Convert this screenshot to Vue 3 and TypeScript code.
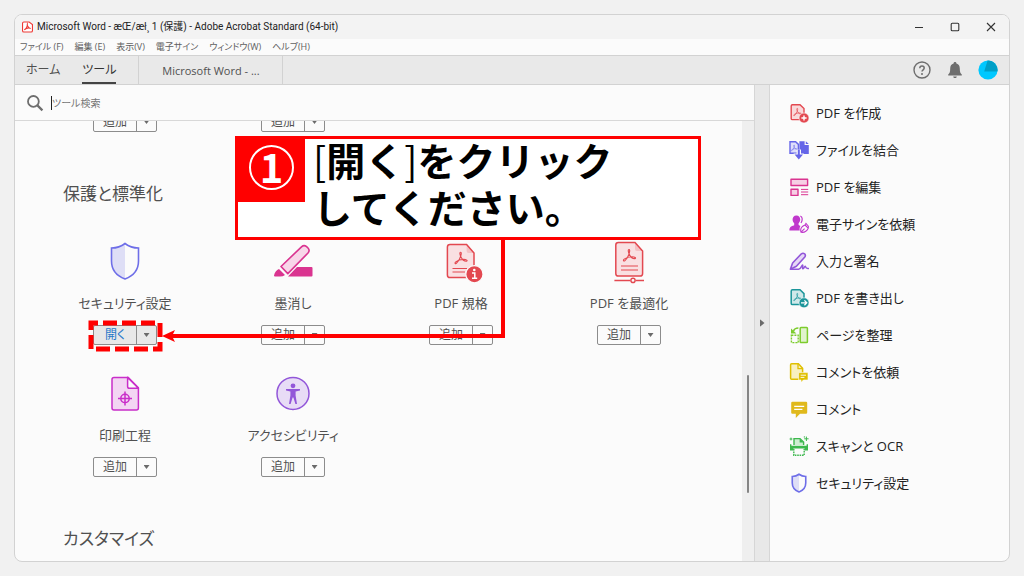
<script setup lang="ts">
interface Tool {
  name: string
  icon: string
  color: string
  action: string
  active?: boolean
}

interface Shortcut {
  name: string
  icon: string
  color: string
}

const menus: string[] = ['ファイル (F)', '編集 (E)', '表示(V)', '電子サイン', 'ウィンドウ(W)', 'ヘルプ(H)']

const tools: Tool[] = [
  { name: 'セキュリティ設定', icon: 'shield', color: '#6e6ee8', action: '開く', active: true },
  { name: '墨消し', icon: 'redact', color: '#da3490', action: '追加' },
  { name: 'PDF 規格', icon: 'standard', color: '#e34850', action: '追加' },
  { name: 'PDF を最適化', icon: 'optimize', color: '#e34850', action: '追加' },
  { name: '印刷工程', icon: 'print', color: '#c92ec9', action: '追加' },
  { name: 'アクセシビリティ', icon: 'access', color: '#9256d9', action: '追加' },
]

const shortcuts: Shortcut[] = [
  { name: 'PDF を作成', icon: 'create', color: '#e34850' },
  { name: 'ファイルを結合', icon: 'combine', color: '#6565e8' },
  { name: 'PDF を編集', icon: 'edit', color: '#da3490' },
  { name: '電子サインを依頼', icon: 'esign', color: '#c038cc' },
  { name: '入力と署名', icon: 'fill', color: '#9256d9' },
  { name: 'PDF を書き出し', icon: 'export', color: '#1b959a' },
  { name: 'ページを整理', icon: 'organize', color: '#7ccc2c' },
  { name: 'コメントを依頼', icon: 'request', color: '#dfbf00' },
  { name: 'コメント', icon: 'comment', color: '#e0b91c' },
  { name: 'スキャンと OCR', icon: 'scan', color: '#3db84e' },
  { name: 'セキュリティ設定', icon: 'shield', color: '#6e6ee8' },
]
</script>

<template>
  <svg class="defs" aria-hidden="true">
    <symbol id="acro" viewBox="0 0 14 14">
      <path d="M6.6 1.2C5.4 1.2 5.8 3.6 7 6C8.4 8.8 11 10.4 12.6 10.2C14 9.8 12.6 8.4 9.6 8.4C6.4 8.4 3.4 9.4 1.8 10.8C.4 12 1.2 13.4 2.6 12.2C4.4 10.6 6.4 6.6 7 4.2C7.4 2.4 7.4 1.2 6.6 1.2Z" fill="none" stroke="currentColor" stroke-width="1.1" />
    </symbol>
    <symbol id="shield" viewBox="0 0 40 40">
      <path d="M20 2.5C15.5 6 11 7 6.5 7V20C6.5 29 12 35 20 38V2.5Z" fill="currentColor" fill-opacity=".2" />
      <path class="line" d="M20 2.5C15.5 6 11 7 6.5 7V20C6.5 29 12 35 20 38C28 35 33.5 29 33.5 20V7C29 7 24.5 6 20 2.5Z" fill="none" stroke="currentColor" stroke-width="1.6" />
    </symbol>
    <symbol id="redact" viewBox="0 0 40 40">
      <path d="M24 26H38.5Q39.5 26 39.5 27V34.5Q39.5 35.5 38.5 35.5H15ZM1 34.5Q2 29.5 6 28L12 34Q10 35.5 7 35.5H2Q1 35.5 1 34.5Z" fill="currentColor" />
      <path d="M8 25.5L28.5 5.8Q31 3.6 33.6 5.6L35 7Q37.2 9.4 35 12L14.8 32.6Z" fill="#f8d6e9" stroke="currentColor" stroke-width="1.6" stroke-linejoin="round" />
    </symbol>
    <symbol id="standard" viewBox="0 0 40 40">
      <path d="M9 3.4H25.6L33 12V34Q33 36.6 30.4 36.6H9Q6.4 36.6 6.4 34V6Q6.4 3.4 9 3.4Z" fill="#f9e0e2" stroke="currentColor" stroke-width="1.5" />
      <path d="M25.6 3.4V10Q25.6 12 27.6 12H33Z" fill="currentColor" fill-opacity=".2" />
      <path d="M11.5 27.5H26M11.5 31H24" stroke="currentColor" stroke-width="1.2" />
      <use href="#acro" x="13" y="10" width="14" height="14" />
      <circle cx="33.4" cy="33.2" r="8.6" fill="currentColor" stroke="#fbfbfb" stroke-width="1.2" />
      <path d="M31 32H33.8V37M31 37.2H36.2" fill="none" stroke="#fff" stroke-width="1.5" />
      <circle cx="33.3" cy="29" r="1.3" fill="#fff" />
    </symbol>
    <symbol id="optimize" viewBox="0 0 40 40">
      <path d="M9.4 1.5H26L33.6 10V32.4Q33.6 35 31 35H9.4Q6.8 35 6.8 32.4V4Q6.8 1.5 9.4 1.5Z" fill="#f9e0e2" stroke="currentColor" stroke-width="1.5" />
      <path d="M26 1.5V8Q26 10 28 10H33.6Z" fill="currentColor" fill-opacity=".2" />
      <path d="M12 25H29M12 29H29" stroke="currentColor" stroke-width="1.2" />
      <use href="#acro" x="13.4" y="7.4" width="14" height="14" />
      <path d="M5.4 39.4H21.4M26.6 39.4H35" stroke="currentColor" stroke-width="1.5" />
      <circle cx="24" cy="39.4" r="2.1" fill="none" stroke="currentColor" stroke-width="1.4" />
    </symbol>
    <symbol id="print" viewBox="0 0 40 40">
      <path d="M9 4.4H23L33.4 14.8V35Q33.4 37 31.4 37H9Q7 37 7 35V6.4Q7 4.4 9 4.4Z" fill="#f3d5f3" stroke="currentColor" stroke-width="1.5" stroke-linejoin="round" />
      <path d="M22.6 4.4V13.4Q22.6 15.2 24.4 15.2H33.4Z" fill="#fbfbfb" stroke="currentColor" stroke-width="1.5" stroke-linejoin="round" />
      <circle cx="20" cy="25.4" r="4.2" fill="none" stroke="currentColor" stroke-width="1.5" />
      <path d="M20 18.4V32.4M13 25.4H27" stroke="currentColor" stroke-width="1.5" />
    </symbol>
    <symbol id="access" viewBox="0 0 40 40">
      <circle cx="20" cy="20.4" r="16" fill="#e8dcf6" stroke="currentColor" stroke-width="1.5" />
      <circle cx="20" cy="12.8" r="2.4" fill="currentColor" />
      <path d="M13 16H27V17.6L22.6 18.4V22.6L24 31H22.4L20.4 24.6H19.6L17.6 31H16L17.4 22.6V18.4L13 17.6Z" fill="currentColor" />
    </symbol>
    <symbol id="create" viewBox="0 0 20 20">
      <path d="M3.4 1.7H11L15 5.6V16.6H3.4Q2.2 16.6 2.2 15.4V2.9Q2.2 1.7 3.4 1.7Z" fill="#f9d9db" stroke="currentColor" stroke-width="1.4" />
      <use href="#acro" x="4" y="4.6" width="9" height="9" />
      <circle cx="15" cy="15" r="5" fill="currentColor" stroke="#fbfbfb" stroke-width=".6" />
      <path d="M15 12.4V17.6M12.4 15H17.6" stroke="#fff" stroke-width="1.4" />
    </symbol>
    <symbol id="combine" viewBox="0 0 20 20">
      <path d="M1 1.8H6.6L9.4 4.4V13.2H1Z" fill="#dedefa" stroke="currentColor" stroke-width="1.4" />
      <use href="#acro" x="1.8" y="4.4" width="7" height="7" />
      <path d="M10.4 1.2H15.6V5H19.8V14H10.4ZM16.8 1.2L19.8 4H16.8Z" fill="currentColor" />
      <path d="M7.6 9.4H12V13.4H14.8V15H4.6V13.4H7.6Z" fill="#fbfbfb" />
      <path d="M8.8 9.4H10.8V14.4H14L9.8 19.6L5.6 14.4H8.8Z" fill="currentColor" />
    </symbol>
    <symbol id="edit" viewBox="0 0 20 20">
      <path d="M2 2.3H18.6V8.5H2ZM2 12.2H9V18.4H2Z" fill="#f6cfe4" stroke="currentColor" stroke-width="1.4" stroke-linejoin="round" />
      <path d="M12 12.4H19.2M12 15H19.2M12 17.7H19.2" stroke="currentColor" stroke-width="1" />
    </symbol>
    <symbol id="esign" viewBox="0 0 20 20">
      <path d="M7.4 1.4C10 1.4 11.2 3.2 11.2 5.4C11.2 7.2 10.3 8.2 9.6 9.2V11L11.4 12C10.6 13.4 10.4 15 10.8 16.6H.4C.2 13.4 2 12.2 5.2 11.2V9.2C4.4 8.2 3.6 7 3.6 5.4C3.6 3.2 4.8 1.4 7.4 1.4Z" fill="currentColor" />
      <path d="M11.4 2C13.6 3 13.8 6.2 12 9" fill="none" stroke="currentColor" stroke-width="1.2" />
      <path d="M12 18.2C10.8 14.6 12.8 12.4 16 11L19.2 14.2C17.8 17.2 15.4 18.8 12 18.2ZM12 18.2L15.6 14.6M16 11L17 9.4L20 13L19.2 14.2" fill="#fbfbfb" stroke="currentColor" stroke-width="1.1" />
    </symbol>
    <symbol id="fill" viewBox="0 0 20 20">
      <path d="M1.4 18.2L3.6 12L12.4 2.8Q14 1.6 15.6 2.8Q17 4.4 15.8 6L7.4 15.2Z" fill="#e6d8f6" stroke="currentColor" stroke-width="1.6" stroke-linejoin="round" />
      <path d="M1.6 18.3H9.6C12.4 18 12.6 13.8 13.6 14C14.4 14.2 12.8 17.8 14 17.8C15.2 17.8 15.4 15 16.2 15.2C17 15.4 16 17.8 19.4 17.4" fill="none" stroke="currentColor" stroke-width="1.5" stroke-linecap="round" />
    </symbol>
    <symbol id="export" viewBox="0 0 20 20">
      <path d="M3.4 1.7H11L15 5.6V16.6H3.4Q2.2 16.6 2.2 15.4V2.9Q2.2 1.7 3.4 1.7Z" fill="#cfe8e9" stroke="currentColor" stroke-width="1.5" />
      <use href="#acro" x="4" y="4.6" width="9" height="9" />
      <circle cx="15" cy="14.8" r="5" fill="currentColor" stroke="#fbfbfb" stroke-width=".6" />
      <path d="M12 14.8H17.6M15.4 12.4L17.8 14.8L15.4 17.2" fill="none" stroke="#fff" stroke-width="1.3" />
    </symbol>
    <symbol id="organize" viewBox="0 0 20 20">
      <rect x="11.2" y="2.4" width="7.2" height="15.2" rx=".8" fill="#e0f3cd" stroke="currentColor" stroke-width="1.5" />
      <rect x="2.4" y="10.2" width="6.8" height="7.4" fill="none" stroke="currentColor" stroke-width="1.4" stroke-dasharray="2 1" />
      <path d="M9.4 3C7 3 5.2 4 4.6 6" fill="none" stroke="currentColor" stroke-width="1.7" />
      <path d="M2 3.4V8.6H7.4Z" fill="currentColor" />
    </symbol>
    <symbol id="request" viewBox="0 0 20 20">
      <path d="M2.6 1.8H9.4L13.6 6.2V17.2H2.6Q1.6 17.2 1.6 16.2V2.8Q1.6 1.8 2.6 1.8Z" fill="#f8f0bf" stroke="currentColor" stroke-width="1.5" />
      <path d="M9 1.8V6.6H13.6" fill="none" stroke="currentColor" stroke-width="1.3" />
      <path d="M9.6 10.6H19V18H14.4L12 20.4V18H9.6Z" fill="currentColor" stroke="#fbfbfb" stroke-width=".6" />
      <path d="M11.6 13.2H17M11.6 15.4H15.4" stroke="#fff" stroke-width=".9" />
    </symbol>
    <symbol id="comment" viewBox="0 0 20 20">
      <path d="M3.4 2.8H17Q18.2 2.8 18.2 4V13.6Q18.2 14.8 17 14.8H11L6.8 19V14.8H3.4Q2.2 14.8 2.2 13.6V4Q2.2 2.8 3.4 2.8Z" fill="currentColor" />
      <path d="M5.2 7.4H15.2M5.2 10.4H13.4" stroke="#fff" stroke-width="1.1" />
    </symbol>
    <symbol id="scan" viewBox="0 0 20 20">
      <path d="M5 9V2.6H11L14.6 6V9" fill="#cdeed2" stroke="currentColor" stroke-width="1.4" />
      <path d="M10.6 2.6V6.4H14.6Z" fill="currentColor" />
      <path d="M1 8.2H2.4V9.8H17.6V8.2H19V14.6H15.6V12.4H4.4V14.6H1Z" fill="currentColor" />
      <path d="M4.8 13V19.2H15.2V13" fill="none" stroke="currentColor" stroke-width="1.4" stroke-dasharray="1.6 .8" />
      <path d="M17.4 .6V5M15.2 2.8H19.6M2 1.6V4.4M.6 3H3.4" stroke="currentColor" stroke-width="1" />
      <circle cx="15.4" cy=".9" r=".7" fill="currentColor" />
    </symbol>
  </svg>

  <div class="desktop">
    <div class="window">
      <header class="titlebar">
        <svg class="app-icon" viewBox="0 0 12 12" aria-hidden="true">
          <path d="M2 .6H7.8L11.4 3.4V10Q11.4 11.4 10 11.4H2Q.6 11.4 .6 10V2Q.6 .6 2 .6Z" fill="#fff" stroke="#ee3a36" stroke-width="1.2" />
          <path d="M5.8 2.6C5.2 4 7 7 9.4 7.6C8 6.6 4.4 7.2 2.6 9C4.4 8.4 6.2 5 5.8 2.6Z" fill="none" stroke="#ee3a36" stroke-width="1.2" />
        </svg>
        <h1 class="title">Microsoft Word - æŒ/æł¸ 1 (保護) - Adobe Acrobat Standard (64-bit)</h1>
        <div class="window-buttons">
          <button type="button" aria-label="最小化"><svg viewBox="0 0 10 10"><path d="M1 5.5H9" /></svg></button>
          <button type="button" aria-label="最大化"><svg viewBox="0 0 10 10"><rect x="1.2" y="1.2" width="7.6" height="7.6" rx="1" /></svg></button>
          <button type="button" aria-label="閉じる"><svg viewBox="0 0 10 10"><path d="M1 1L9 9M9 1L1 9" /></svg></button>
        </div>
      </header>

      <nav class="menubar">
        <button v-for="menu in menus" :key="menu" type="button">{{ menu }}</button>
      </nav>

      <div class="tabbar">
        <button class="tab" type="button">ホーム</button>
        <button class="tab current" type="button">ツール</button>
        <button class="document-tab" type="button">Microsoft Word - ...</button>
        <div class="account">
          <button type="button" aria-label="ヘルプ">
            <svg viewBox="0 0 20 20">
              <circle cx="10" cy="10" r="8" fill="none" stroke="#6e6e6e" stroke-width="1.4" />
              <path d="M7.8 8.2C7.8 5.2 12.2 5.4 12.2 8C12.2 9.8 10 9.8 10 11.6" fill="none" stroke="#6e6e6e" stroke-width="1.5" />
              <circle cx="10" cy="14" r="1" fill="#6e6e6e" />
            </svg>
          </button>
          <button type="button" aria-label="通知">
            <svg viewBox="0 0 20 20">
              <path d="M10 2C10.9 2 11.4 2.6 11.4 3.4C13.8 4 14.8 6 14.8 8.4C14.8 12 15.4 13.2 16.8 14.4V15.6H3.2V14.4C4.6 13.2 5.2 12 5.2 8.4C5.2 6 6.2 4 8.6 3.4C8.6 2.6 9.1 2 10 2ZM8.2 16.4H11.8C11.6 18.6 8.4 18.6 8.2 16.4Z" fill="#6e6e6e" />
            </svg>
          </button>
          <button type="button" aria-label="アカウント">
            <svg viewBox="0 0 20 20">
              <circle cx="10" cy="10" r="9.6" fill="#00c8ff" />
              <path d="M6.2 11.4L9.6 .5A9.6 9.6 0 0 1 19.5 11.4Z" fill="#009fc7" />
            </svg>
          </button>
        </div>
      </div>

      <div class="body">
        <main class="pane">
          <label class="search">
            <svg viewBox="0 0 18 18" aria-hidden="true">
              <circle cx="7.4" cy="7.4" r="5.4" fill="none" stroke="#6e6e6e" stroke-width="1.8" />
              <path d="M11.4 11.4L16.4 16.4" stroke="#6e6e6e" stroke-width="2.2" />
            </svg>
            <span class="caret"></span>
            <input type="text" placeholder="ツール検索" aria-label="ツール検索" />
          </label>

          <div class="scroller">
            <div class="content">
              <div class="grid partial">
                <div v-for="n in 2" :key="n" class="card">
                  <div class="split">
                    <button type="button">追加</button>
                    <button class="more" type="button" aria-label="オプション"></button>
                  </div>
                </div>
              </div>
              <h2>保護と標準化</h2>
              <div class="grid">
                <section v-for="tool in tools" :key="tool.name" class="card">
                  <svg class="tool-icon" :style="{ color: tool.color }" aria-hidden="true"><use :href="'#' + tool.icon" /></svg>
                  <h3>{{ tool.name }}</h3>
                  <div class="split" :class="{ active: tool.active }">
                    <button type="button">{{ tool.action }}</button>
                    <button class="more" type="button" aria-label="オプション"></button>
                    <svg v-if="tool.active" class="highlight" aria-hidden="true">
                      <rect x="3" y="3" width="69" height="26" />
                    </svg>
                  </div>
                </section>
              </div>
              <h2>カスタマイズ</h2>
            </div>
            <div class="track"><span class="thumb"></span></div>
          </div>
        </main>

        <button class="divider" type="button" aria-label="パネルを閉じる"></button>

        <aside class="side">
          <a v-for="item in shortcuts" :key="item.name" href="#">
            <svg :style="{ color: item.color }" aria-hidden="true"><use :href="'#' + item.icon" /></svg>
            {{ item.name }}
          </a>
        </aside>
      </div>

      <svg class="arrow" viewBox="0 0 345 102" aria-hidden="true">
        <path d="M341 0V97H10" fill="none" stroke="#f00" stroke-width="4" />
        <path d="M0 97L13 91L10 97L13 103Z" fill="#f00" />
      </svg>
      <div class="callout">
        <div class="step"><span>1</span></div>
        <p><i>[</i>開く<i>]</i>をクリック<br />してください。</p>
      </div>
    </div>
  </div>
</template>

<style>
body {
  margin: 0;
  background: #f1f1f1;
}
</style>

<style scoped>
* {
  box-sizing: border-box;
}

.defs {
  position: absolute;
  width: 0;
  height: 0;
}

symbol {
  overflow: visible;
}

.line {
  vector-effect: non-scaling-stroke;
}

.desktop {
  display: flex;
  min-height: 100vh;
  padding: 14px;
  font-family: "Open Sans", "Noto Sans CJK JP", sans-serif;
  font-feature-settings: "palt";
  color: #505050;
}

.window {
  position: relative;
  display: flex;
  flex: 1;
  flex-direction: column;
  min-width: 0;
  border: 1px solid #d2d2d2;
  border-radius: 8px;
  background: #fbfbfb;
  overflow: hidden;
}

button {
  padding: 0;
  border: 0;
  background: none;
  color: inherit;
  font: inherit;
  font-feature-settings: inherit;
  white-space: nowrap;
}

.titlebar {
  display: flex;
  align-items: center;
  height: 24px;
  padding-left: 7px;
  background: #f3f3f3;
}

.app-icon {
  width: 11px;
  height: 12px;
  margin-right: 4px;
}

.title {
  flex: 1;
  margin: 0;
  color: #222;
  font-family: Roboto, "Noto Sans CJK JP", sans-serif;
  font-size: 10px;
  font-weight: 400;
  line-height: 24px;
  white-space: nowrap;
}

.window-buttons {
  display: flex;
}

.window-buttons button {
  display: grid;
  width: 36px;
  height: 24px;
  place-items: center;
}

.window-buttons svg {
  width: 10px;
  height: 10px;
  fill: none;
  stroke: #333;
  stroke-width: 1.1;
}

.menubar {
  display: flex;
  gap: 11px;
  height: 16px;
  padding-left: 5px;
  color: #606060;
  font-size: 9px;
  line-height: 16px;
}

.tabbar {
  display: flex;
  height: 30px;
  border: solid #d2d2d2;
  border-width: 1px 0;
  background: #e9e9e9;
}

.tab {
  margin-left: 11px;
  border-bottom: 2px solid transparent;
  font-size: 12px;
}

.tab + .tab {
  margin-left: 22px;
}

.current {
  border-color: #444;
  color: #333;
}

.document-tab {
  width: 145px;
  margin-left: 22px;
  border: solid #d2d2d2;
  border-width: 0 1px;
  font-size: 11px;
}

.account {
  display: flex;
  align-items: center;
  gap: 13px;
  margin-left: auto;
  padding-right: 11px;
}

.account button,
.account svg {
  display: block;
  width: 20px;
  height: 20px;
}

.body {
  display: flex;
  flex: 1;
}

.pane {
  display: flex;
  flex: 1;
  flex-direction: column;
  min-width: 0;
}

.search {
  display: flex;
  align-items: center;
  height: 36px;
  padding-left: 11px;
  border-bottom: 1px solid #d8d8d8;
}

.search svg {
  width: 18px;
  height: 18px;
}

.caret {
  width: 1px;
  height: 14px;
  margin-left: 7px;
  background: #222;
}

.search input {
  flex: 1;
  min-width: 0;
  padding: 0;
  border: 0;
  outline: 0;
  background: none;
  font: 10px "Open Sans", "Noto Sans CJK JP", sans-serif;
  font-feature-settings: inherit;
}

.search input::placeholder {
  color: #757575;
  opacity: 1;
}

.scroller {
  display: flex;
  flex: 1;
  overflow: hidden;
}

.content {
  flex: 1;
  min-width: 0;
  padding-left: 26px;
}

.grid {
  display: grid;
  grid-template-columns: repeat(4, minmax(0, 168px));
  row-gap: 28px;
}

.partial {
  margin-top: -9px;
}

.card {
  display: flex;
  flex-direction: column;
  align-items: center;
}

.tool-icon {
  width: 40px;
  height: 40px;
  overflow: visible;
}

h2 {
  margin: 50px 0 35px 22px;
  font-size: 17px;
  font-weight: 400;
  line-height: 24px;
}

h2:last-child {
  margin-bottom: 8px;
}

h3 {
  margin: 12px 0;
  font-size: 13px;
  font-weight: 400;
  line-height: 20px;
  white-space: nowrap;
}

.split {
  position: relative;
  display: flex;
  width: 64px;
  height: 20px;
  border: 1px solid #8c8c8c;
  border-radius: 2px;
  font-size: 12px;
  line-height: 18px;
}

.split button {
  flex: 1;
}

.split .more {
  display: grid;
  flex: 0 0 20px;
  border-left: 1px solid #8c8c8c;
  place-items: center;
}

.more::after {
  width: 6px;
  height: 4px;
  background: #6a6a6a;
  clip-path: polygon(0 0, 100% 0, 50% 100%);
  content: "";
}

.active {
  background: #e8e8e8;
}

.active button:first-child {
  color: #2878c8;
}

.highlight {
  position: absolute;
  top: -6px;
  left: -6px;
  width: 75px;
  height: 32px;
  fill: none;
  stroke: #f00;
  stroke-width: 5;
  stroke-dasharray: 14 5;
  stroke-dashoffset: 7;
}

.track {
  display: grid;
  flex: 0 0 12px;
  grid-template-rows: 253fr 118fr 68fr;
  justify-content: center;
  background: #efefef;
}

.thumb {
  grid-row: 2;
  width: 2px;
  border-radius: 1px;
  background: #858585;
}

.divider {
  display: grid;
  flex: 0 0 16px;
  border: solid #d6d6d6;
  border-width: 0 1px;
  background: #e8e8e8;
  place-items: center;
}

.divider::after {
  width: 5px;
  height: 8px;
  background: #6a6a6a;
  clip-path: polygon(0 0, 100% 50%, 0 100%);
  content: "";
}

.side {
  flex: 0 0 239px;
  padding-top: 9px;
}

.side a {
  display: flex;
  align-items: center;
  gap: 7px;
  height: 37px;
  padding-left: 19px;
  color: #222;
  font-size: 13px;
  line-height: 18px;
  text-decoration: none;
  white-space: nowrap;
}

.side svg {
  width: 20px;
  height: 20px;
}

.arrow {
  position: absolute;
  top: 224px;
  left: 147px;
  width: 345px;
  height: 102px;
  overflow: visible;
}

.callout {
  position: absolute;
  top: 121px;
  left: 220px;
  display: flex;
  gap: 8px;
  width: 466px;
  height: 104px;
  border: 3px solid #f00;
  background: #fff;
}

.step {
  display: grid;
  width: 67px;
  height: 63px;
  padding-bottom: 6px;
  background: #f00;
  place-items: center;
}

.step span {
  width: 45px;
  height: 45px;
  border: 2px solid #fff;
  border-radius: 50%;
  color: #fff;
  font: 700 40px/38px "Noto Sans CJK JP", sans-serif;
  text-align: center;
}

.callout p {
  margin: -3px 0 0;
  color: #000;
  font: 700 39px/47px "Noto Sans CJK JP", sans-serif;
  font-feature-settings: normal;
  white-space: nowrap;
}

.callout i {
  font-style: normal;
  font-weight: 400;
}
</style>
